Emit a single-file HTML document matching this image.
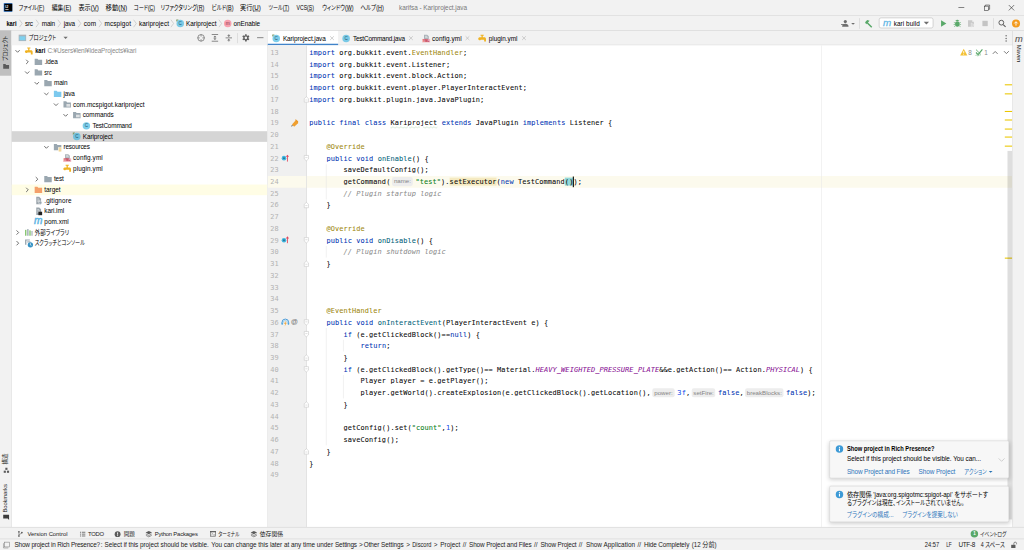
<!DOCTYPE html>
<html lang="ja">
<head>
<meta charset="utf-8">
<title>karifsa - Kariproject.java</title>
<style>
html,body{margin:0;padding:0;background:#f2f2f2;overflow:hidden}
body{width:1024px;height:550px;position:relative}
#app{position:absolute;left:0;top:0;width:1920px;height:1031.25px;transform:scale(0.5333333);transform-origin:0 0;
 font-family:"Liberation Sans","Noto Sans CJK JP",sans-serif;font-size:12px;color:#000;background:#f2f2f2;overflow:hidden}
#app *{box-sizing:border-box}
.abs{position:absolute}
.t{position:absolute;white-space:nowrap;line-height:16px;height:16px}
svg{position:absolute;overflow:visible}
/* menubar */
#menubar{position:absolute;left:0;top:0;width:1920px;height:30px;border-bottom:1px solid #d4d4d4}
#menubar .t{top:7px;font-size:12px;color:#000}
#navbar{position:absolute;left:0;top:30px;width:1920px;height:28px;border-bottom:1px solid #d1d1d1}
#navbar .t{top:6px}
.sep{position:absolute;color:#a0a0a0}
/* stripes */
#lstripe{position:absolute;left:0;top:58px;width:22px;height:930px;border-right:1px solid #d1d1d1}
#rstripe{position:absolute;left:1898px;top:58px;width:22px;height:930px;border-left:1px solid #d1d1d1}
#bstripe{position:absolute;left:0;top:988px;width:1920px;height:22px;border-top:1px solid #d1d1d1;font-size:11px}
#bstripe .t{top:4px;font-size:11px;color:#1a1a1a}
#status{position:absolute;left:0;top:1010px;width:1920px;height:22px;border-top:1px solid #d1d1d1}
#status .t{top:3px;color:#1a1a1a}
/* project panel */
#proj{position:absolute;left:22px;top:58px;width:480px;height:930px;background:#fff;border-right:1px solid #d1d1d1}
#projhead{position:absolute;left:0;top:0;width:479px;height:27px;background:#f2f2f2}
.row{position:absolute;left:0;width:479px;height:20px}
.row .t{top:2px;font-size:12px}
.g{color:#8c8c8c}
/* editor */
#tabs{position:absolute;left:502px;top:58px;width:1396px;height:27px;border-bottom:1px solid #d1d1d1}
#tabs .t{top:6px}
#editor{position:absolute;left:502px;top:85px;width:1396px;height:903px;background:#fff;overflow:hidden}
#gutter{position:absolute;left:0;top:0;width:73px;height:903px;background:#f0f0f0;border-right:1px solid #d4d4d4}
.ln{position:absolute;left:4.8px;width:20px;font-family:"DejaVu Sans Mono","Liberation Mono",monospace;font-size:13px;letter-spacing:0.17px;color:#b2b2b2;line-height:22px;height:22px;margin-top:0.65px}
.cl{position:absolute;left:78px;white-space:pre;font-family:"DejaVu Sans Mono","Liberation Mono",monospace;font-size:13px;letter-spacing:0.174px;color:#080808;line-height:22px;height:22px;margin-top:0.65px;-webkit-text-stroke:0.1px}
.k{color:#0033b3}.s{color:#067d17}.a{color:#9e880d}.m{color:#00627a}.c{color:#8c8c8c;font-style:italic}.f{color:#871094;font-style:italic}.n{color:#1750eb}
.w{background:#f5eac1}.b{background:#93d9d9}
.typo{text-decoration:underline wavy #b9dcb9 1px;text-underline-offset:1px}
.h{display:inline-block;vertical-align:top;height:22px;position:relative;letter-spacing:0}
.h i{position:absolute;left:3px;right:5px;top:1.8px;height:17px;background:#ededed;border-radius:4px;font-style:normal;font-family:"Liberation Sans",sans-serif;font-size:11.5px;line-height:17px;color:#858585;-webkit-text-stroke:0;text-align:center;letter-spacing:0}
.caret{display:inline-block;width:2px;height:20px;background:#000;vertical-align:top;margin:1px -1px 0 -1px}
.guide{position:absolute;width:1px;background:#e4e4e4}
.note{position:absolute;background:#f7f7f7;border:1px solid #d1d1d1;border-radius:3px;box-shadow:0 3px 8px rgba(0,0,0,0.18)}
.note .t{font-size:12px}
.lnk{color:#2c74ba}
</style>
</head>
<body>
<div id="app">
<div id="menubar">
<svg style="left:7.00px;top:6.00px" width="16" height="16" viewBox="0 0 16 16"><rect x="0" y="0" width="16" height="16" fill="#1e6fd0"/><rect x="1.2" y="1" width="14.8" height="14" fill="#000"/><text x="3" y="8.2" font-size="6.5" font-weight="bold" font-family="Liberation Sans,sans-serif" fill="#fff">IJ</text><rect x="3" y="11.5" width="6" height="1.3" fill="#fff"/></svg>
<span class="t" style="left:34.69px;top:6.50px;font-feature-settings:'palt';transform:scaleX(0.8404);transform-origin:0 50%;">ファイル(<u>F</u>)</span>
<span class="t" style="left:96.56px;top:6.50px;font-feature-settings:'palt';transform:scaleX(0.9140);transform-origin:0 50%;">編集(<u>E</u>)</span>
<span class="t" style="left:147.19px;top:6.50px;font-feature-settings:'palt';transform:scaleX(0.9610);transform-origin:0 50%;">表示(<u>V</u>)</span>
<span class="t" style="left:197.81px;top:6.50px;font-feature-settings:'palt';transform:scaleX(0.9911);transform-origin:0 50%;">移動(<u>N</u>)</span>
<span class="t" style="left:250.78px;top:6.50px;font-feature-settings:'palt';transform:scaleX(0.8030);transform-origin:0 50%;">コード(<u>C</u>)</span>
<span class="t" style="left:301.41px;top:6.50px;font-feature-settings:'palt';transform:scaleX(0.8337);transform-origin:0 50%;">リファクタリング(<u>R</u>)</span>
<span class="t" style="left:396.56px;top:6.50px;font-feature-settings:'palt';transform:scaleX(0.8540);transform-origin:0 50%;">ビルド(<u>B</u>)</span>
<span class="t" style="left:449.81px;top:6.50px;font-feature-settings:'palt';transform:scaleX(0.9611);transform-origin:0 50%;">実行(<u>U</u>)</span>
<span class="t" style="left:503.44px;top:6.50px;font-feature-settings:'palt';transform:scaleX(0.7968);transform-origin:0 50%;">ツール(<u>T</u>)</span>
<span class="t" style="left:556.12px;top:6.50px;transform:scaleX(0.8020);transform-origin:0 50%;">VCS(<u>S</u>)</span>
<span class="t" style="left:603.75px;top:6.50px;font-feature-settings:'palt';transform:scaleX(0.8392);transform-origin:0 50%;">ウィンドウ(<u>W</u>)</span>
<span class="t" style="left:676.41px;top:6.50px;font-feature-settings:'palt';transform:scaleX(0.8531);transform-origin:0 50%;">ヘルプ(<u>H</u>)</span>
<span class="t" style="left:748.12px;top:6.50px;color:#787878;letter-spacing:-0.048px;">karifsa - Kariproject.java</span>
<svg style="left:1797.00px;top:14.00px" width="11" height="1" viewBox="0 0 11 1"><rect width="11" height="1" fill="#222"/></svg>
<svg style="left:1845.00px;top:9.00px" width="11" height="11" viewBox="0 0 11 11"><path d="M2.500 2.500v-2h8v8h-2" fill="none" stroke="#222" stroke-width="1"/><rect x="0.5" y="2.500" width="8" height="8" fill="none" stroke="#222" stroke-width="1"/></svg>
<svg style="left:1891.00px;top:9.00px" width="11" height="11" viewBox="0 0 11 11"><path d="M0.500 0.500l10 10M10.500 0.500l-10 10" stroke="#222" stroke-width="1.100"/></svg>
</div>
<div id="navbar">
<span class="t" style="left:11.72px;top:6.00px;font-weight:bold;transform:scaleX(0.8998);transform-origin:0 50%;">kari</span>
<span class="t" style="left:46.88px;top:6.00px;letter-spacing:-0.588px;">src</span>
<svg style="left:34.91px;top:6.00px" width="8" height="16" viewBox="0 0 8 16"><path d="M1.5 1l5 7-5 7" fill="none" stroke="#b4b4b4" stroke-width="1"/></svg>
<span class="t" style="left:78.28px;top:6.00px;letter-spacing:-0.336px;">main</span>
<svg style="left:65.84px;top:6.00px" width="8" height="16" viewBox="0 0 8 16"><path d="M1.5 1l5 7-5 7" fill="none" stroke="#b4b4b4" stroke-width="1"/></svg>
<span class="t" style="left:119.53px;top:6.00px;letter-spacing:-0.264px;">java</span>
<svg style="left:107.33px;top:6.00px" width="8" height="16" viewBox="0 0 8 16"><path d="M1.5 1l5 7-5 7" fill="none" stroke="#b4b4b4" stroke-width="1"/></svg>
<span class="t" style="left:157.03px;top:6.00px;letter-spacing:0.119px;">com</span>
<svg style="left:144.83px;top:6.00px" width="8" height="16" viewBox="0 0 8 16"><path d="M1.5 1l5 7-5 7" fill="none" stroke="#b4b4b4" stroke-width="1"/></svg>
<span class="t" style="left:195.94px;top:6.00px;letter-spacing:0.221px;">mcspigot</span>
<svg style="left:183.97px;top:6.00px" width="8" height="16" viewBox="0 0 8 16"><path d="M1.5 1l5 7-5 7" fill="none" stroke="#b4b4b4" stroke-width="1"/></svg>
<span class="t" style="left:260.62px;top:6.00px;letter-spacing:0.085px;">kariproject</span>
<svg style="left:249.12px;top:6.00px" width="8" height="16" viewBox="0 0 8 16"><path d="M1.5 1l5 7-5 7" fill="none" stroke="#b4b4b4" stroke-width="1"/></svg>
<svg style="left:319.44px;top:6.00px" width="8" height="16" viewBox="0 0 8 16"><path d="M1.5 1l5 7-5 7" fill="none" stroke="#b4b4b4" stroke-width="1"/></svg>
<svg style="left:329.50px;top:6.00px" width="16" height="16" viewBox="0 0 16 16"><circle cx="8" cy="8" r="7" fill="#3fb6e0" opacity=".68"/><text x="8" y="10.900" font-size="8.500" font-family="Liberation Sans,sans-serif" text-anchor="middle" fill="#23596e">C</text><path d="M0.5 0.5h4.5l-4.5 4.5z" fill="#7a9a6a"/></svg>
<span class="t" style="left:348.75px;top:6.00px;letter-spacing:-0.016px;">Kariproject</span>
<svg style="left:409.44px;top:6.00px" width="8" height="16" viewBox="0 0 8 16"><path d="M1.5 1l5 7-5 7" fill="none" stroke="#b4b4b4" stroke-width="1"/></svg>
<svg style="left:419.03px;top:6.00px" width="16" height="16" viewBox="0 0 16 16"><circle cx="8" cy="8" r="7" fill="#f98b9e" opacity=".8"/><text x="8" y="11" font-size="9" font-family="Liberation Sans,sans-serif" text-anchor="middle" fill="#7d3442">m</text></svg>
<span class="t" style="left:438.00px;top:6.00px;letter-spacing:-0.163px;">onEnable</span>
<svg style="left:1577.31px;top:5.60px" width="16" height="16" viewBox="0 0 16 16"><circle cx="8" cy="4.500" r="3" fill="#6e6e6e"/><path d="M2 14c0-4 2.500-5.500 6-5.500s6 1.500 6 5.500z" fill="#6e6e6e"/><rect x="0" y="9" width="9" height="1.600" fill="#6e6e6e"/></svg>
<svg style="left:1596.25px;top:12.85px" width="7.0" height="3.5" viewBox="0 0 7.0 3.5"><path d="M0 0h7.0l-3.5 3.5z" fill="#6e6e6e"/></svg>
<div class="abs" style="left:1611.1px;top:4px;width:1px;height:20px;background:#cdcdcd"></div>
<svg style="left:1619.50px;top:5.60px" width="16" height="16" viewBox="0 0 16 16"><path d="M2 5.500l4-4 4.500 1.500-3 3 8 8-2 2-8-8-1.500 1.500z" fill="#59a869"/></svg>
<div class="abs" style="left:1647.7px;top:2.8px;width:102.6px;height:20.2px;background:#fff;border:1px solid #b4b4b4;border-radius:4px"></div>
<svg style="left:1656.06px;top:5.10px" width="16" height="16" viewBox="0 0 16 16"><text x="7.500" y="13" font-size="18.5" font-style="italic" font-weight="normal" font-family="Liberation Sans,sans-serif" text-anchor="middle" fill="#5fb6e4" stroke="#5fb6e4" stroke-width="0.5">m</text></svg>
<span class="t" style="left:1675.78px;top:5.60px;letter-spacing:0.076px;">kari build</span>
<svg style="left:1731.72px;top:10.60px" width="10" height="5" viewBox="0 0 10 5"><path d="M0 0h10l-5 5z" fill="#6e6e6e"/></svg>
<svg style="left:1761.06px;top:5.60px" width="16" height="16" viewBox="0 0 16 16"><path d="M3.500 2l10 6-10 6z" fill="#59a869"/></svg>
<svg style="left:1786.84px;top:5.60px" width="16" height="16" viewBox="0 0 16 16"><ellipse cx="8" cy="9" rx="4.200" ry="5" fill="#59a869"/><path d="M5.500 3.500a2.500 2.500 0 0 1 5 0z" fill="#59a869"/><path d="M1.500 6l3 1.500M14.500 6l-3 1.500M1 10h3M15 10h-3M2 14l2.500-1.500M14 14l-2.500-1.500M4.500 1.500l1.500 1.500M11.500 1.500l-1.500 1.500" stroke="#59a869" stroke-width="1.200"/></svg>
<svg style="left:1812.62px;top:5.60px" width="16" height="16" viewBox="0 0 16 16"><path d="M2 2h8v3h3v9H2z" fill="#c9c9c9"/><path d="M8 7l6 4-6 4z" fill="#d6d6d6" stroke="#f2f2f2" stroke-width=".8"/></svg>
<svg style="left:1838.88px;top:5.60px" width="16" height="16" viewBox="0 0 16 16"><rect x="3" y="3" width="10" height="10" fill="#c4c4c4"/></svg>
<div class="abs" style="left:1861.9px;top:4px;width:1px;height:20px;background:#cdcdcd"></div>
<svg style="left:1871.22px;top:5.60px" width="16" height="16" viewBox="0 0 16 16"><circle cx="6.500" cy="6.500" r="4.500" fill="none" stroke="#5a5a5a" stroke-width="1.800"/><path d="M10 10l4.500 4.500" stroke="#5a5a5a" stroke-width="2"/></svg>
<svg style="left:1897.00px;top:5.60px" width="16" height="16" viewBox="0 0 16 16"><circle cx="8" cy="8" r="7.500" fill="#f39a1d"/><path d="M8 12V5M4.800 8l3.200-3.300 3.200 3.300" stroke="#fff" stroke-width="1.700" fill="none"/></svg>
</div>
<div id="lstripe">
<div class="abs" style="left:0;top:-0.6px;width:21px;height:84.7px;background:#bfbfbf"></div>
<span class="t" style="left:2.10px;top:56.38px;font-size:11px;color:#1a1a1a;font-feature-settings:'palt';transform:rotate(-90deg) scaleX(0.7883);transform-origin:0 0;">プロジェクト</span>
<svg style="left:5.92px;top:62.19px" width="11" height="9" viewBox="0 0 11 9"><path d="M0 0h4.200l1.300 1.800H11V9H0z" fill="#5a5a5a"/></svg>
<span class="t" style="left:2.10px;top:812.56px;font-size:11px;color:#1a1a1a;font-feature-settings:'palt';transform:rotate(-90deg) scaleX(0.9459);transform-origin:0 0;">構造</span>
<svg style="left:6.50px;top:818.62px" width="10" height="10" viewBox="0 0 10 10"><rect x="0" y="5.500" width="4" height="4" fill="#5a5a5a"/><rect x="6" y="5.500" width="4" height="4" fill="#5a5a5a"/><rect x="3" y="0" width="4" height="4" fill="#5a5a5a"/></svg>
<span class="t" style="left:2.10px;top:902.56px;font-size:11px;color:#1a1a1a;letter-spacing:-0.232px;transform:rotate(-90deg);transform-origin:0 0;">Bookmarks</span>
<svg style="left:6.00px;top:907.31px" width="11" height="10" viewBox="0 0 11 10"><path d="M0 0h11v10l-2.500-3H0z" fill="#3c3c3c"/></svg>
</div>
<div id="rstripe">
<svg style="left:3.69px;top:6.62px" width="16" height="16" viewBox="0 0 16 16"><text x="7.500" y="13" font-size="17.5" font-style="italic" font-weight="normal" font-family="Liberation Sans,sans-serif" text-anchor="middle" fill="#555" stroke="#555" stroke-width="0.2">m</text></svg>
<span class="t" style="left:19.69px;top:25.91px;font-size:11px;color:#1a1a1a;letter-spacing:-0.049px;transform:rotate(90deg);transform-origin:0 0;">Maven</span>
</div>
<div id="proj">
<div id="projhead">
<svg style="left:12.70px;top:7.25px" width="14" height="12" viewBox="0 0 14 12"><rect x="0" y="0" width="14" height="12" fill="#a9b3ba"/><rect x="1.500" y="3" width="11" height="7.500" fill="#7fd0ee"/></svg>
<span class="t" style="left:32.38px;top:5.25px;font-feature-settings:'palt';transform:scaleX(0.8013);transform-origin:0 50%;">プロジェクト</span>
<svg style="left:97.00px;top:11.25px" width="8" height="4" viewBox="0 0 8 4"><path d="M0 0h8l-4 4z" fill="#6e6e6e"/></svg>
<svg style="left:347.88px;top:6.25px" width="14" height="14" viewBox="0 0 14 14"><circle cx="7" cy="7" r="6.200" fill="none" stroke="#6e6e6e" stroke-width="1.400"/><path d="M7 0.500v4M7 9.500v4M0.500 7h4M9.500 7h4" stroke="#6e6e6e" stroke-width="1.300"/></svg>
<svg style="left:375.12px;top:6.25px" width="12" height="14" viewBox="0 0 12 14"><path d="M0 0.700h12M0 13.300h12" stroke="#6e6e6e" stroke-width="1.500"/><path d="M6 2.800L3 6h6zM6 11.200L3 8h6z" fill="#6e6e6e"/><path d="M6 5v4" stroke="#6e6e6e" stroke-width="1.200"/></svg>
<svg style="left:400.62px;top:6.25px" width="12" height="14" viewBox="0 0 12 14"><path d="M0 7h12" stroke="#6e6e6e" stroke-width="1.500"/><path d="M6 5.300L3 2.100h6zM6 8.700L3 11.900h6z" fill="#6e6e6e"/><path d="M6 0v3M6 11v3" stroke="#6e6e6e" stroke-width="1.200"/></svg>
<div class="abs" style="left:423.3px;top:4px;width:1px;height:19px;background:#cdcdcd"></div>
<svg style="left:432.25px;top:6.25px" width="14" height="14" viewBox="0 0 14 14"><circle cx="7" cy="7" r="3.700" fill="none" stroke="#5e5e5e" stroke-width="2.600"/><path d="M7.00 11.20L7.00 13.80M3.36 9.10L1.11 10.40M3.36 4.90L1.11 3.60M7.00 2.80L7.00 0.20M10.64 4.90L12.89 3.60M10.64 9.10L12.89 10.40" stroke="#5e5e5e" stroke-width="3"/></svg>
<svg style="left:459.50px;top:11.55px" width="12" height="2" viewBox="0 0 12 2"><rect width="12" height="1.500" fill="#6e6e6e"/></svg>
</div>
<div class="row" style="top:27.6px;">
<svg style="left:6.00px;top:6.00px" width="10" height="8" viewBox="0 0 10 8"><path d="M1 2l4 4 4-4" fill="none" stroke="#626262" stroke-width="1.7"/></svg>
<svg style="left:24.00px;top:2.00px" width="16" height="16" viewBox="0 0 16 16"><path d="M5 1h6v1.800H9.200v3.200H12c2 0 3.200 1.200 3.200 3.200V14h-3.400v-3.600H5.500A2.700 2.700 0 1 1 3.300 6H6.800V2.800H5z" fill="#f0b323"/></svg>
<span class="t" style="left:43.62px;font-weight:bold;transform:scaleX(0.8778);transform-origin:0 50%;">kari</span>
<span class="t g" style="left:67.06px;letter-spacing:-0.273px;">C:¥Users¥lenl¥IdeaProjects¥kari</span>
</div>
<div class="row" style="top:47.6px;">
<svg style="left:25.00px;top:5.00px" width="8" height="10" viewBox="0 0 8 10"><path d="M2 1l4 4-4 4" fill="none" stroke="#626262" stroke-width="1.7"/></svg>
<svg style="left:42.00px;top:2.00px" width="16" height="16" viewBox="0 0 16 16"><path d="M1 2h5.2l1.600 2H15v9.700H1z" fill="#9aa7b0"/></svg>
<span class="t" style="left:61.25px;letter-spacing:-0.222px;">.idea</span>
</div>
<div class="row" style="top:67.6px;">
<svg style="left:24.00px;top:6.00px" width="10" height="8" viewBox="0 0 10 8"><path d="M1 2l4 4 4-4" fill="none" stroke="#626262" stroke-width="1.7"/></svg>
<svg style="left:42.00px;top:2.00px" width="16" height="16" viewBox="0 0 16 16"><path d="M1 2h5.2l1.600 2H15v9.700H1z" fill="#9aa7b0"/></svg>
<span class="t" style="left:61.06px;transform:scaleX(0.8675);transform-origin:0 50%;">src</span>
</div>
<div class="row" style="top:87.6px;">
<svg style="left:42.00px;top:6.00px" width="10" height="8" viewBox="0 0 10 8"><path d="M1 2l4 4 4-4" fill="none" stroke="#626262" stroke-width="1.7"/></svg>
<svg style="left:60.00px;top:2.00px" width="16" height="16" viewBox="0 0 16 16"><path d="M1 2h5.2l1.600 2H15v9.700H1z" fill="#9aa7b0"/></svg>
<span class="t" style="left:79.25px;letter-spacing:-0.253px;">main</span>
</div>
<div class="row" style="top:107.6px;">
<svg style="left:60.00px;top:6.00px" width="10" height="8" viewBox="0 0 10 8"><path d="M1 2l4 4 4-4" fill="none" stroke="#626262" stroke-width="1.7"/></svg>
<svg style="left:78.00px;top:2.00px" width="16" height="16" viewBox="0 0 16 16"><path d="M1 2h5.2l1.600 2H15v9.700H1z" fill="#7cc9ee"/></svg>
<span class="t" style="left:97.25px;letter-spacing:-0.399px;">java</span>
</div>
<div class="row" style="top:127.6px;">
<svg style="left:78.00px;top:6.00px" width="10" height="8" viewBox="0 0 10 8"><path d="M1 2l4 4 4-4" fill="none" stroke="#626262" stroke-width="1.7"/></svg>
<svg style="left:96.00px;top:2.00px" width="16" height="16" viewBox="0 0 16 16"><path d="M1 2h5.2l1.600 2H15v9.700H1z" fill="#9aa7b0"/><rect x="6.5" y="7" width="7" height="5" fill="#f2f2f2" opacity=".75"/></svg>
<span class="t" style="left:114.88px;letter-spacing:0.057px;">com.mcspigot.kariproject</span>
</div>
<div class="row" style="top:147.6px;">
<svg style="left:96.00px;top:6.00px" width="10" height="8" viewBox="0 0 10 8"><path d="M1 2l4 4 4-4" fill="none" stroke="#626262" stroke-width="1.7"/></svg>
<svg style="left:114.00px;top:2.00px" width="16" height="16" viewBox="0 0 16 16"><path d="M1 2h5.2l1.600 2H15v9.700H1z" fill="#9aa7b0"/><rect x="6.5" y="7" width="7" height="5" fill="#f2f2f2" opacity=".75"/></svg>
<span class="t" style="left:133.06px;letter-spacing:-0.076px;">commands</span>
</div>
<div class="row" style="top:167.6px;">
<svg style="left:132.00px;top:2.00px" width="16" height="16" viewBox="0 0 16 16"><circle cx="8" cy="8" r="7" fill="#3fb6e0" opacity=".68"/><text x="8" y="10.900" font-size="8.500" font-family="Liberation Sans,sans-serif" text-anchor="middle" fill="#23596e">C</text></svg>
<span class="t" style="left:151.25px;letter-spacing:-0.333px;">TestCommand</span>
</div>
<div class="row" style="top:187.6px;background:#d5d5d5;">
<svg style="left:114.00px;top:2.00px" width="16" height="16" viewBox="0 0 16 16"><circle cx="8" cy="8" r="7" fill="#3fb6e0" opacity=".68"/><text x="8" y="10.900" font-size="8.500" font-family="Liberation Sans,sans-serif" text-anchor="middle" fill="#23596e">C</text><path d="M0.5 0.5h4.5l-4.5 4.5z" fill="#7a9a6a"/></svg>
<span class="t" style="left:133.06px;letter-spacing:-0.106px;">Kariproject</span>
</div>
<div class="row" style="top:207.6px;">
<svg style="left:60.00px;top:6.00px" width="10" height="8" viewBox="0 0 10 8"><path d="M1 2l4 4 4-4" fill="none" stroke="#626262" stroke-width="1.7"/></svg>
<svg style="left:78.00px;top:2.00px" width="16" height="16" viewBox="0 0 16 16"><path d="M1 2h5.2l1.600 2H15v9.700H1z" fill="#9aa7b0"/><rect x="9" y="8" width="7" height="8" fill="#fff"/><path d="M10 9.5h5M10 11.5h5M10 13.5h5M10 15.2h5" stroke="#e8b33a" stroke-width="1.1"/></svg>
<span class="t" style="left:97.25px;letter-spacing:-0.420px;">resources</span>
</div>
<div class="row" style="top:227.6px;">
<svg style="left:96.00px;top:2.00px" width="16" height="16" viewBox="0 0 16 16"><path d="M4 1h6l3 3v6H4z" fill="#aab2b8"/><path d="M6 4h4M6 6h5" stroke="#fff" stroke-width="1"/><rect x="0.5" y="9" width="15" height="6.5" fill="#f3b3bc"/><text x="8" y="14.5" font-size="5.5" font-weight="bold" font-family="Liberation Sans,sans-serif" text-anchor="middle" fill="#b3243e">YML</text></svg>
<span class="t" style="left:114.88px;letter-spacing:0.194px;">config.yml</span>
</div>
<div class="row" style="top:247.6px;">
<svg style="left:96.00px;top:2.00px" width="16" height="16" viewBox="0 0 16 16"><path d="M5 1h6v1.800H9.200v3.200H12c2 0 3.200 1.200 3.200 3.200V14h-3.400v-3.600H5.500A2.700 2.700 0 1 1 3.300 6H6.800V2.800H5z" fill="#f0b323"/></svg>
<span class="t" style="left:114.88px;letter-spacing:0.194px;">plugin.yml</span>
</div>
<div class="row" style="top:267.6px;">
<svg style="left:43.00px;top:5.00px" width="8" height="10" viewBox="0 0 8 10"><path d="M2 1l4 4-4 4" fill="none" stroke="#626262" stroke-width="1.7"/></svg>
<svg style="left:60.00px;top:2.00px" width="16" height="16" viewBox="0 0 16 16"><path d="M1 2h5.2l1.600 2H15v9.700H1z" fill="#9aa7b0"/></svg>
<span class="t" style="left:79.25px;letter-spacing:-0.384px;">test</span>
</div>
<div class="row" style="top:287.6px;background:#fffde5;">
<svg style="left:25.00px;top:5.00px" width="8" height="10" viewBox="0 0 8 10"><path d="M2 1l4 4-4 4" fill="none" stroke="#626262" stroke-width="1.7"/></svg>
<svg style="left:42.00px;top:2.00px" width="16" height="16" viewBox="0 0 16 16"><path d="M1 2h5.2l1.600 2H15v9.700H1z" fill="#f4a06a"/></svg>
<span class="t" style="left:61.06px;letter-spacing:-0.023px;">target</span>
</div>
<div class="row" style="top:307.6px;">
<svg style="left:42.00px;top:2.00px" width="16" height="16" viewBox="0 0 16 16"><path d="M4 1h5.500L13 4.500V15H4z" fill="#9aa4ab"/><path d="M6 5h3M6 7.5h5M6 10h5" stroke="#fff" stroke-width="1"/><circle cx="11.5" cy="12" r="3" fill="#9aa7b0" stroke="#fff" stroke-width=".8"/></svg>
<span class="t" style="left:61.06px;letter-spacing:0.171px;">.gitignore</span>
</div>
<div class="row" style="top:327.6px;">
<svg style="left:42.00px;top:2.00px" width="16" height="16" viewBox="0 0 16 16"><path d="M4 1h5.500L13 4.500V15H4z" fill="#9aa4ab"/><path d="M6 5h3M6 7.5h5M6 10h5" stroke="#fff" stroke-width="1"/><rect x="8" y="9" width="7" height="6.5" fill="#222"/></svg>
<span class="t" style="left:61.06px;letter-spacing:-0.117px;">kari.iml</span>
</div>
<div class="row" style="top:347.6px;">
<svg style="left:42.00px;top:1.50px" width="16" height="16" viewBox="0 0 16 16"><text x="7.500" y="13" font-size="19" font-style="italic" font-weight="normal" font-family="Liberation Sans,sans-serif" text-anchor="middle" fill="#5fb6e4" stroke="#5fb6e4" stroke-width="0.9">m</text></svg>
<span class="t" style="left:61.06px;letter-spacing:0.062px;">pom.xml</span>
</div>
<div class="row" style="top:367.6px;">
<svg style="left:7.00px;top:5.00px" width="8" height="10" viewBox="0 0 8 10"><path d="M2 1l4 4-4 4" fill="none" stroke="#626262" stroke-width="1.7"/></svg>
<svg style="left:24.00px;top:2.00px" width="16" height="16" viewBox="0 0 16 16"><rect x="1" y="3" width="2.5" height="11" fill="#62b543" opacity=".8"/><rect x="5" y="1.5" width="2.5" height="12.5" fill="#9aa7b0"/><rect x="9" y="4" width="2.5" height="10" fill="#62b543" opacity=".8"/><rect x="13" y="5" width="2" height="9" fill="#9aa7b0"/></svg>
<span class="t" style="left:43.44px;font-feature-settings:'palt';transform:scaleX(0.8572);transform-origin:0 50%;">外部ライブラリ</span>
</div>
<div class="row" style="top:387.6px;">
<svg style="left:7.00px;top:5.00px" width="8" height="10" viewBox="0 0 8 10"><path d="M2 1l4 4-4 4" fill="none" stroke="#626262" stroke-width="1.7"/></svg>
<svg style="left:24.00px;top:2.00px" width="16" height="16" viewBox="0 0 16 16"><path d="M1 1h9v2H3.5v8H1z" fill="#9aa7b0"/><path d="M5 4h6v3H5z" fill="#9aa7b0" opacity=".7"/><circle cx="11" cy="11" r="5" fill="#3592c4"/><path d="M11 8v3.300l2 1.200" stroke="#fff" stroke-width="1.2" fill="none"/></svg>
<span class="t" style="left:43.44px;font-feature-settings:'palt';transform:scaleX(0.7997);transform-origin:0 50%;">スクラッチとコンソール</span>
</div>
</div>
<div id="tabs">
<div class="abs" style="left:0;top:0;width:131.6px;height:27px;background:#fff;border-bottom:3px solid #4083c9"></div>
<svg style="left:7.50px;top:5.50px" width="16" height="16" viewBox="0 0 16 16"><circle cx="8" cy="8" r="7" fill="#3fb6e0" opacity=".68"/><text x="8" y="10.900" font-size="8.500" font-family="Liberation Sans,sans-serif" text-anchor="middle" fill="#23596e">C</text><path d="M0.5 0.5h4.5l-4.5 4.5z" fill="#7a9a6a"/></svg>
<span class="t" style="left:28.44px;top:5.50px;letter-spacing:-0.153px;">Kariproject.java</span>
<svg style="left:116.81px;top:10.00px" width="7.0" height="7.0" viewBox="0 0 7.0 7.0"><path d="M0 0l7.0 7.0M7.0 0l-7.0 7.0" stroke="#b0b0b0" stroke-width="1.1"/></svg>
<svg style="left:138.75px;top:5.50px" width="16" height="16" viewBox="0 0 16 16"><circle cx="8" cy="8" r="7" fill="#3fb6e0" opacity=".68"/><text x="8" y="10.900" font-size="8.500" font-family="Liberation Sans,sans-serif" text-anchor="middle" fill="#23596e">C</text></svg>
<span class="t" style="left:159.69px;top:5.50px;letter-spacing:-0.324px;">TestCommand.java</span>
<svg style="left:265.12px;top:10.00px" width="7.0" height="7.0" viewBox="0 0 7.0 7.0"><path d="M0 0l7.0 7.0M7.0 0l-7.0 7.0" stroke="#b0b0b0" stroke-width="1.1"/></svg>
<svg style="left:288.75px;top:5.50px" width="16" height="16" viewBox="0 0 16 16"><path d="M4 1h6l3 3v6H4z" fill="#aab2b8"/><path d="M6 4h4M6 6h5" stroke="#fff" stroke-width="1"/><rect x="0.5" y="9" width="15" height="6.5" fill="#f3b3bc"/><text x="8" y="14.5" font-size="5.5" font-weight="bold" font-family="Liberation Sans,sans-serif" text-anchor="middle" fill="#b3243e">YML</text></svg>
<span class="t" style="left:308.00px;top:5.50px;letter-spacing:0.184px;">config.yml</span>
<svg style="left:371.06px;top:10.00px" width="7.0" height="7.0" viewBox="0 0 7.0 7.0"><path d="M0 0l7.0 7.0M7.0 0l-7.0 7.0" stroke="#b0b0b0" stroke-width="1.1"/></svg>
<svg style="left:393.75px;top:5.50px" width="16" height="16" viewBox="0 0 16 16"><path d="M5 1h6v1.800H9.200v3.200H12c2 0 3.200 1.200 3.200 3.200V14h-3.400v-3.600H5.500A2.700 2.700 0 1 1 3.300 6H6.800V2.800H5z" fill="#f0b323"/></svg>
<span class="t" style="left:414.41px;top:5.50px;letter-spacing:-0.013px;">plugin.yml</span>
<svg style="left:477.00px;top:10.00px" width="7.0" height="7.0" viewBox="0 0 7.0 7.0"><path d="M0 0l7.0 7.0M7.0 0l-7.0 7.0" stroke="#b0b0b0" stroke-width="1.1"/></svg>
<svg style="left:1383.22px;top:6.50px" width="3" height="14" viewBox="0 0 3 14"><circle cx="1.500" cy="2" r="1.400" fill="#6e6e6e"/><circle cx="1.500" cy="7" r="1.400" fill="#6e6e6e"/><circle cx="1.500" cy="12" r="1.400" fill="#6e6e6e"/></svg>
</div>
<div id="editor">
<div class="abs" style="left:0;top:244.5px;width:1396px;height:22px;background:#fcfaed"></div>
<div class="abs" style="left:1038px;top:0;width:1px;height:903px;background:#e6e6e6"></div>
<div class="guide" style="left:108.5px;top:222.6px;height:66px"></div>
<div class="guide" style="left:108.5px;top:376.4px;height:22px"></div>
<div class="guide" style="left:108.5px;top:530.3px;height:220px"></div>
<div class="guide" style="left:140.5px;top:552.2px;height:22px"></div>
<div class="guide" style="left:140.5px;top:618.2px;height:44px"></div>
<div id="gutter">
<div class="abs" style="left:0;top:244.5px;width:72px;height:22px;background:#fcfaed"></div>
<div class="ln" style="top:2.8px">13</div>
<div class="ln" style="top:24.7px">14</div>
<div class="ln" style="top:46.7px">15</div>
<div class="ln" style="top:68.7px">16</div>
<div class="ln" style="top:90.7px">17</div>
<div class="ln" style="top:112.7px">18</div>
<div class="ln" style="top:134.6px">19</div>
<div class="ln" style="top:156.6px">20</div>
<div class="ln" style="top:178.6px">21</div>
<div class="ln" style="top:200.6px">22</div>
<div class="ln" style="top:222.6px">23</div>
<div class="ln" style="top:244.5px">24</div>
<div class="ln" style="top:266.5px">25</div>
<div class="ln" style="top:288.5px">26</div>
<div class="ln" style="top:310.5px">27</div>
<div class="ln" style="top:332.4px">28</div>
<div class="ln" style="top:354.4px">29</div>
<div class="ln" style="top:376.4px">30</div>
<div class="ln" style="top:398.4px">31</div>
<div class="ln" style="top:420.4px">32</div>
<div class="ln" style="top:442.4px">33</div>
<div class="ln" style="top:464.3px">34</div>
<div class="ln" style="top:486.3px">35</div>
<div class="ln" style="top:508.3px">36</div>
<div class="ln" style="top:530.3px">37</div>
<div class="ln" style="top:552.2px">38</div>
<div class="ln" style="top:574.2px">39</div>
<div class="ln" style="top:596.2px">40</div>
<div class="ln" style="top:618.2px">41</div>
<div class="ln" style="top:640.2px">42</div>
<div class="ln" style="top:662.1px">43</div>
<div class="ln" style="top:684.1px">44</div>
<div class="ln" style="top:706.1px">45</div>
<div class="ln" style="top:728.1px">46</div>
<div class="ln" style="top:750.1px">47</div>
<div class="ln" style="top:772.1px">48</div>
<div class="ln" style="top:794.0px">49</div>
</div>
<svg style="left:42.70px;top:138.63px" width="14" height="14" viewBox="0 0 14 14"><path d="M0.500 13.500l2-3.500 2 2z" fill="#6e6e6e"/><path d="M2.500 9.500l6.500-7.500 3 0 2 2 0 3-7.500 6.500z" fill="#f0a030"/><path d="M9 0.500l4.500 4.500" stroke="#e8952a" stroke-width="2"/></svg>
<svg style="left:25.70px;top:207.07px" width="9" height="9" viewBox="0 0 9 9"><circle cx="4.500" cy="4.500" r="4.300" fill="#3fb6e0"/><circle cx="4.500" cy="4.500" r="1.800" fill="#2b6f8c"/></svg>
<svg style="left:33.90px;top:204.57px" width="6" height="13" viewBox="0 0 6 13"><path d="M3 13V2" stroke="#e0455a" stroke-width="1.600"/><path d="M0 4l3-4 3 4z" fill="#e0455a"/></svg>
<svg style="left:25.70px;top:360.93px" width="9" height="9" viewBox="0 0 9 9"><circle cx="4.500" cy="4.500" r="4.300" fill="#3fb6e0"/><circle cx="4.500" cy="4.500" r="1.800" fill="#2b6f8c"/></svg>
<svg style="left:33.90px;top:358.43px" width="6" height="13" viewBox="0 0 6 13"><path d="M3 13V2" stroke="#e0455a" stroke-width="1.600"/><path d="M0 4l3-4 3 4z" fill="#e0455a"/></svg>
<svg style="left:24.90px;top:511.29px" width="16" height="16" viewBox="0 0 16 16"><path d="M1.800 11v-2.500a6.200 6.200 0 0 1 12.400 0V11" fill="none" stroke="#3d94d6" stroke-width="1.700"/><path d="M4 10.500V9a4 4 0 0 1 8 0v1.500" fill="none" stroke="#8ccaf2" stroke-width="1.500"/><rect x="0.800" y="8.500" width="2.600" height="4.500" rx="1.200" fill="#4aa3e0"/><rect x="12.600" y="8.500" width="2.600" height="4.500" rx="1.200" fill="#4aa3e0"/><path d="M9.400 5l-4 6h2.600l-1.400 5.200 4.200-7.200h-2.600z" fill="#f2a93b"/></svg>
<svg style="left:43.00px;top:512.29px" width="14" height="14" viewBox="0 0 14 14"><text x="7" y="11" font-size="13" font-weight="bold" font-family="Liberation Sans,sans-serif" text-anchor="middle" fill="#777">@</text></svg>
<svg style="left:68.00px;top:206.07px" width="9" height="11" viewBox="0 0 9 11"><path d="M0.500 0.500h8v6.500l-4 3.500-4-3.500z" fill="#fff" stroke="#c2c2c2" stroke-width="1"/><path d="M2.500 4.500h4" stroke="#c2c2c2" stroke-width="1"/></svg>
<svg style="left:68.00px;top:359.93px" width="9" height="11" viewBox="0 0 9 11"><path d="M0.500 0.500h8v6.500l-4 3.500-4-3.500z" fill="#fff" stroke="#c2c2c2" stroke-width="1"/><path d="M2.500 4.500h4" stroke="#c2c2c2" stroke-width="1"/></svg>
<svg style="left:68.00px;top:513.79px" width="9" height="11" viewBox="0 0 9 11"><path d="M0.500 0.500h8v6.500l-4 3.500-4-3.500z" fill="#fff" stroke="#c2c2c2" stroke-width="1"/><path d="M2.500 4.500h4" stroke="#c2c2c2" stroke-width="1"/></svg>
<svg style="left:68.00px;top:535.77px" width="9" height="11" viewBox="0 0 9 11"><path d="M0.500 0.500h8v6.500l-4 3.500-4-3.500z" fill="#fff" stroke="#c2c2c2" stroke-width="1"/><path d="M2.500 4.500h4" stroke="#c2c2c2" stroke-width="1"/></svg>
<svg style="left:68.00px;top:601.71px" width="9" height="11" viewBox="0 0 9 11"><path d="M0.500 0.500h8v6.500l-4 3.500-4-3.500z" fill="#fff" stroke="#c2c2c2" stroke-width="1"/><path d="M2.500 4.500h4" stroke="#c2c2c2" stroke-width="1"/></svg>
<svg style="left:68.00px;top:293.99px" width="9" height="11" viewBox="0 0 9 11"><path d="M0.500 10.500h8v-6.500l-4-3.500-4 3.500z" fill="#fff" stroke="#c2c2c2" stroke-width="1"/><path d="M2.500 6.500h4" stroke="#c2c2c2" stroke-width="1"/></svg>
<svg style="left:68.00px;top:403.89px" width="9" height="11" viewBox="0 0 9 11"><path d="M0.500 10.500h8v-6.500l-4-3.500-4 3.500z" fill="#fff" stroke="#c2c2c2" stroke-width="1"/><path d="M2.500 6.500h4" stroke="#c2c2c2" stroke-width="1"/></svg>
<svg style="left:68.00px;top:579.73px" width="9" height="11" viewBox="0 0 9 11"><path d="M0.500 10.500h8v-6.500l-4-3.500-4 3.500z" fill="#fff" stroke="#c2c2c2" stroke-width="1"/><path d="M2.500 6.500h4" stroke="#c2c2c2" stroke-width="1"/></svg>
<svg style="left:68.00px;top:667.65px" width="9" height="11" viewBox="0 0 9 11"><path d="M0.500 10.500h8v-6.500l-4-3.500-4 3.500z" fill="#fff" stroke="#c2c2c2" stroke-width="1"/><path d="M2.500 6.500h4" stroke="#c2c2c2" stroke-width="1"/></svg>
<svg style="left:68.00px;top:755.57px" width="9" height="11" viewBox="0 0 9 11"><path d="M0.500 10.500h8v-6.500l-4-3.500-4 3.500z" fill="#fff" stroke="#c2c2c2" stroke-width="1"/><path d="M2.500 6.500h4" stroke="#c2c2c2" stroke-width="1"/></svg>
<svg style="left:68.00px;top:96.17px" width="9" height="11" viewBox="0 0 9 11"><path d="M0.500 10.500h8v-6.500l-4-3.500-4 3.500z" fill="#fff" stroke="#c2c2c2" stroke-width="1"/><path d="M2.500 6.500h4" stroke="#c2c2c2" stroke-width="1"/></svg>
<div class="cl" style="top:2.8px"><span class="k">import</span> org.bukkit.event.<span class="a">EventHandler</span>;</div>
<div class="cl" style="top:24.7px"><span class="k">import</span> org.bukkit.event.Listener;</div>
<div class="cl" style="top:46.7px"><span class="k">import</span> org.bukkit.event.block.Action;</div>
<div class="cl" style="top:68.7px"><span class="k">import</span> org.bukkit.event.player.PlayerInteractEvent;</div>
<div class="cl" style="top:90.7px"><span class="k">import</span> org.bukkit.plugin.java.JavaPlugin;</div>
<div class="cl" style="top:134.6px"><span class="k">public</span> <span class="k">final</span> <span class="k">class</span> <span class="typo">Kariproject</span> <span class="k">extends</span> JavaPlugin <span class="k">implements</span> Listener {</div>
<div class="cl" style="top:178.6px">    <span class="a">@Override</span></div>
<div class="cl" style="top:200.6px">    <span class="k">public</span> <span class="k">void</span> <span class="m">onEnable</span>() {</div>
<div class="cl" style="top:222.6px">        saveDefaultConfig();</div>
<div class="cl" style="top:244.5px">        getCommand(<span class="h" style="width:47px"><i>name:</i></span><span class="s">&quot;test&quot;</span>).<span class="w">setExecutor</span>(<span class="k">new</span> TestCommand<span class="b">()</span><span class="caret"></span>);</div>
<div class="cl" style="top:266.5px">        <span class="c">// Plugin startup logic</span></div>
<div class="cl" style="top:288.5px">    }</div>
<div class="cl" style="top:332.4px">    <span class="a">@Override</span></div>
<div class="cl" style="top:354.4px">    <span class="k">public</span> <span class="k">void</span> <span class="m">onDisable</span>() {</div>
<div class="cl" style="top:376.4px">        <span class="c">// Plugin shutdown logic</span></div>
<div class="cl" style="top:398.4px">    }</div>
<div class="cl" style="top:486.3px">    <span class="a">@EventHandler</span></div>
<div class="cl" style="top:508.3px">    <span class="k">public</span> <span class="k">void</span> <span class="m">onInteractEvent</span>(PlayerInteractEvent e) {</div>
<div class="cl" style="top:530.3px">        <span class="k">if</span> (e.getClickedBlock()==<span class="k">null</span>) {</div>
<div class="cl" style="top:552.2px">            <span class="k">return</span>;</div>
<div class="cl" style="top:574.2px">        }</div>
<div class="cl" style="top:596.2px">        <span class="k">if</span> (e.getClickedBlock().getType()== Material.<span class="f">HEAVY_WEIGHTED_PRESSURE_PLATE</span>&amp;&amp;e.getAction()== Action.<span class="f">PHYSICAL</span>) {</div>
<div class="cl" style="top:618.2px">            Player player = e.getPlayer();</div>
<div class="cl" style="top:640.2px">            player.getWorld().createExplosion(e.getClickedBlock().getLocation(),<span class="h" style="width:50px"><i>power:</i></span><span class="n">3f</span>,<span class="h" style="width:52.3px"><i>setFire:</i></span><span class="k">false</span>,<span class="h" style="width:79.3px"><i>breakBlocks:</i></span><span class="k">false</span>);</div>
<div class="cl" style="top:662.1px">        }</div>
<div class="cl" style="top:706.1px">        getConfig().set(<span class="s">&quot;count&quot;</span>,<span class="n">1</span>);</div>
<div class="cl" style="top:728.1px">        saveConfig();</div>
<div class="cl" style="top:750.1px">    }</div>
<div class="cl" style="top:772.1px">}</div>
<svg style="left:1297.60px;top:6.40px" width="14" height="14" viewBox="0 0 14 14"><path d="M7 0.500l6.800 12.500H0.200z" fill="#f4c133"/><path d="M7 4.500v4.500" stroke="#fff" stroke-width="1.600"/><circle cx="7" cy="11" r="0.900" fill="#fff"/></svg>
<span class="t" style="left:1313.50px;top:6.40px;color:#8c8c8c;">8</span>
<svg style="left:1325.60px;top:6.40px" width="16" height="14" viewBox="0 0 16 14"><path d="M2 7.500l4 4 8-10" fill="none" stroke="#59a869" stroke-width="2.200"/><path d="M2 2l9 9" stroke="#59a869" stroke-width="1.600"/><path d="M1 13c1-1.500 2-1.500 3 0s2 1.500 3 0 2-1.500 3 0" fill="none" stroke="#59a869" stroke-width="1"/></svg>
<span class="t" style="left:1343.50px;top:6.40px;color:#8c8c8c;">1</span>
<svg style="left:1358.60px;top:9.90px" width="10" height="7" viewBox="0 0 10 7"><path d="M0.500 6l4.500-4.500 4.500 4.500" fill="none" stroke="#737373" stroke-width="1.800"/></svg>
<svg style="left:1379.70px;top:9.90px" width="10" height="7" viewBox="0 0 10 7"><path d="M0.500 1l4.500 4.500 4.500-4.500" fill="none" stroke="#737373" stroke-width="1.800"/></svg>
<div class="abs" style="left:1382px;top:73.0px;width:14px;height:2px;background:#ebc700"></div>
<div class="abs" style="left:1382px;top:90.2px;width:14px;height:2px;background:#ebc700"></div>
<div class="abs" style="left:1382px;top:122.5px;width:14px;height:2px;background:#ebc700"></div>
<div class="abs" style="left:1382px;top:139.0px;width:14px;height:2px;background:#ebc700"></div>
<div class="abs" style="left:1382px;top:155.5px;width:14px;height:2px;background:#ebc700"></div>
<div class="abs" style="left:1382px;top:171.2px;width:14px;height:2px;background:#ebc700"></div>
<div class="abs" style="left:1382px;top:187.8px;width:14px;height:2px;background:#ebc700"></div>
<div class="abs" style="left:1382px;top:397.8px;width:14px;height:2px;background:#ebc700"></div>
<div class="abs" style="left:1386.5px;top:198.1px;width:9.5px;height:690.9px;background:rgba(0,0,0,0.13)"></div>
</div>
<div class="note" style="left:1555px;top:826px;width:337px;height:71px">
<svg style="left:10.56px;top:8.12px" width="14" height="14" viewBox="0 0 14 14"><circle cx="7" cy="7" r="7" fill="#3d9ad6"/><rect x="6" y="6" width="2" height="5" fill="#fff"/><circle cx="7" cy="3.800" r="1.200" fill="#fff"/></svg>
<span class="t" style="left:32.00px;top:7.12px;font-weight:bold;transform:scaleX(0.8979);transform-origin:0 50%;">Show project in Rich Presence?</span>
<span class="t" style="left:32.00px;top:26.44px;letter-spacing:-0.079px;">Select if this project should be visible. You can...</span>
<svg style="left:315.50px;top:32.00px" width="12" height="7" viewBox="0 0 12 7"><path d="M0.500 0.500l5.500 5.500 5.500-5.500" fill="none" stroke="#bdbdbd" stroke-width="1.300"/></svg>
<span class="t lnk" style="left:32.00px;top:48.94px;letter-spacing:-0.249px;">Show Project and Files</span>
<span class="t lnk" style="left:166.25px;top:48.94px;letter-spacing:-0.165px;">Show Project</span>
<span class="t lnk" style="left:251.75px;top:48.94px;font-feature-settings:'palt';transform:scaleX(0.8072);transform-origin:0 50%;">アクション</span>
<svg style="left:297.75px;top:55.75px" width="7.0" height="3.5" viewBox="0 0 7.0 3.5"><path d="M0 0h7.0l-3.5 3.5z" fill="#2470b3"/></svg>
</div>
<div class="note" style="left:1555px;top:911px;width:337px;height:68px">
<svg style="left:10.56px;top:7.69px" width="14" height="14" viewBox="0 0 14 14"><circle cx="7" cy="7" r="7" fill="#3d9ad6"/><rect x="6" y="6" width="2" height="5" fill="#fff"/><circle cx="7" cy="3.800" r="1.200" fill="#fff"/></svg>
<span class="t" style="left:32.00px;top:6.69px;font-feature-settings:'palt';transform:scaleX(0.9650);transform-origin:0 50%;">依存関係 &#x27;java:org.spigotmc:spigot-api&#x27; をサポートす</span>
<span class="t" style="left:32.00px;top:23.00px;font-feature-settings:'palt';transform:scaleX(0.8634);transform-origin:0 50%;">るプラグインは現在、インストールされていません。</span>
<span class="t lnk" style="left:32.00px;top:46.06px;font-feature-settings:'palt';transform:scaleX(0.8818);transform-origin:0 50%;">プラグインの構成...</span>
<span class="t lnk" style="left:135.69px;top:46.06px;font-feature-settings:'palt';transform:scaleX(0.8509);transform-origin:0 50%;">プラグインを提案しない</span>
</div>
<div id="bstripe">
<svg style="left:32.50px;top:6.30px" width="10" height="12" viewBox="0 0 10 12"><circle cx="2.500" cy="2" r="1.600" fill="#5a5a5a"/><circle cx="2.500" cy="10" r="1.600" fill="#5a5a5a"/><circle cx="8" cy="3.500" r="1.600" fill="#5a5a5a"/><path d="M2.500 2v8M8 3.500c0 3-5.500 2-5.500 5" fill="none" stroke="#5a5a5a" stroke-width="1.100"/></svg>
<span class="t" style="left:51.56px;top:4.30px;font-size:11px;letter-spacing:-0.015px;">Version Control</span>
<svg style="left:149.69px;top:7.80px" width="10" height="9" viewBox="0 0 10 9"><path d="M0 1h2M0 4.500h2M0 8h2M3.500 1H10M3.500 4.500H10M3.500 8H10" stroke="#5a5a5a" stroke-width="1.500"/></svg>
<span class="t" style="left:165.00px;top:4.30px;font-size:11px;letter-spacing:-0.451px;">TODO</span>
<svg style="left:215.38px;top:6.80px" width="11" height="11" viewBox="0 0 11 11"><circle cx="5.500" cy="5.500" r="5.500" fill="#5a5a5a"/><rect x="4.600" y="2.300" width="1.800" height="4.200" fill="#f2f2f2"/><rect x="4.600" y="7.500" width="1.800" height="1.700" fill="#f2f2f2"/></svg>
<span class="t" style="left:231.75px;top:4.30px;font-size:11px;font-feature-settings:'palt';transform:scaleX(0.9545);transform-origin:0 50%;">問題</span>
<svg style="left:273.00px;top:6.30px" width="12" height="12" viewBox="0 0 12 12"><path d="M6 0.500l6 3-6 3-6-3z" fill="#5a5a5a"/><path d="M0.500 6.200l5.500 2.800 5.500-2.800M0.500 8.800l5.500 2.800 5.500-2.800" fill="none" stroke="#5a5a5a" stroke-width="1.200"/></svg>
<span class="t" style="left:290.06px;top:4.30px;font-size:11px;letter-spacing:-0.332px;">Python Packages</span>
<svg style="left:393.88px;top:7.30px" width="11" height="10" viewBox="0 0 11 10"><rect x="0.600" y="0.600" width="9.800" height="8.800" fill="none" stroke="#5a5a5a" stroke-width="1.200"/><path d="M2.500 3l2 2-2 2M6 7h3" fill="none" stroke="#5a5a5a" stroke-width="1.100"/><rect x="0" y="0" width="11" height="2" fill="#5a5a5a"/></svg>
<span class="t" style="left:409.31px;top:4.30px;font-size:11px;font-feature-settings:'palt';transform:scaleX(0.7972);transform-origin:0 50%;">ターミナル</span>
<svg style="left:469.69px;top:6.30px" width="12" height="12" viewBox="0 0 12 12"><path d="M6 0.500l6 3-6 3-6-3z" fill="#5a5a5a"/><path d="M0.500 6.200l5.500 2.800 5.500-2.800M0.500 8.800l5.500 2.800 5.500-2.800" fill="none" stroke="#5a5a5a" stroke-width="1.200"/></svg>
<span class="t" style="left:486.75px;top:4.30px;font-size:11px;font-feature-settings:'palt';transform:scaleX(0.9970);transform-origin:0 50%;">依存関係</span>
<svg style="left:1820.00px;top:5.30px" width="14" height="14" viewBox="0 0 14 14"><circle cx="7" cy="7" r="7" fill="#59a869"/><text x="7" y="10" font-size="8.500" font-weight="bold" font-family="Liberation Sans,sans-serif" text-anchor="middle" fill="#fff">1</text></svg>
<span class="t" style="left:1838.44px;top:4.30px;font-size:11px;font-feature-settings:'palt';transform:scaleX(0.8212);transform-origin:0 50%;">イベントログ</span>
</div>
<div id="status">
<svg style="left:6.00px;top:5.30px" width="12" height="12" viewBox="0 0 12 12"><rect x="2.500" y="0.500" width="9" height="9" fill="none" stroke="#7a7a7a" stroke-width="1"/><path d="M0.500 2.500v9h9" fill="none" stroke="#7a7a7a" stroke-width="1"/></svg>
<span class="t" style="left:27.19px;top:3.30px;letter-spacing:-0.332px;">Show project in Rich Presence?</span>
<span class="t" style="left:188.81px;top:3.30px;">:</span>
<span class="t" style="left:195.94px;top:3.30px;letter-spacing:-0.098px;">Select if this project should be visible.</span>
<span class="t" style="left:396.09px;top:3.30px;letter-spacing:-0.049px;">You can change this later at any time under</span>
<span class="t" style="left:628.12px;top:3.30px;letter-spacing:-0.281px;">Settings</span>
<span class="t" style="left:672.94px;top:3.30px;">&gt;</span>
<span class="t" style="left:682.03px;top:3.30px;letter-spacing:-0.127px;">Other Settings</span>
<span class="t" style="left:761.62px;top:3.30px;">&gt;</span>
<span class="t" style="left:772.50px;top:3.30px;transform:scaleX(0.8870);transform-origin:0 50%;">Discord</span>
<span class="t" style="left:813.19px;top:3.30px;">&gt;</span>
<span class="t" style="left:825.47px;top:3.30px;letter-spacing:0.008px;">Project</span>
<span class="t" style="left:867.75px;top:3.30px;">//</span>
<span class="t" style="left:879.38px;top:3.30px;letter-spacing:-0.241px;">Show Project and Files</span>
<span class="t" style="left:1001.25px;top:3.30px;">//</span>
<span class="t" style="left:1013.44px;top:3.30px;letter-spacing:-0.279px;">Show Project</span>
<span class="t" style="left:1085.25px;top:3.30px;">//</span>
<span class="t" style="left:1098.56px;top:3.30px;letter-spacing:0.054px;">Show Application</span>
<span class="t" style="left:1195.12px;top:3.30px;">//</span>
<span class="t" style="left:1207.31px;top:3.30px;letter-spacing:-0.202px;">Hide Completely</span>
<span class="t" style="left:1296.75px;top:3.30px;font-feature-settings:'palt';transform:scaleX(0.9590);transform-origin:0 50%;">(12 分前)</span>
<span class="t" style="left:1734.38px;top:3.30px;transform:scaleX(0.8991);transform-origin:0 50%;">24:57</span>
<span class="t" style="left:1773.75px;top:3.30px;transform:scaleX(0.7492);transform-origin:0 50%;">LF</span>
<span class="t" style="left:1797.38px;top:3.30px;letter-spacing:-0.722px;">UTF-8</span>
<span class="t" style="left:1839.38px;top:3.30px;font-feature-settings:'palt';transform:scaleX(0.8304);transform-origin:0 50%;">4 スペース</span>
<svg style="left:1894.69px;top:4.80px" width="12" height="12" viewBox="0 0 12 12"><rect x="1" y="5.500" width="8" height="6" fill="#5a5a5a"/><path d="M6 5.500v-2.500a2.500 2.500 0 0 1 5 0v1.500" fill="none" stroke="#5a5a5a" stroke-width="1.300"/></svg>
</div></div>
</body>
</html>
